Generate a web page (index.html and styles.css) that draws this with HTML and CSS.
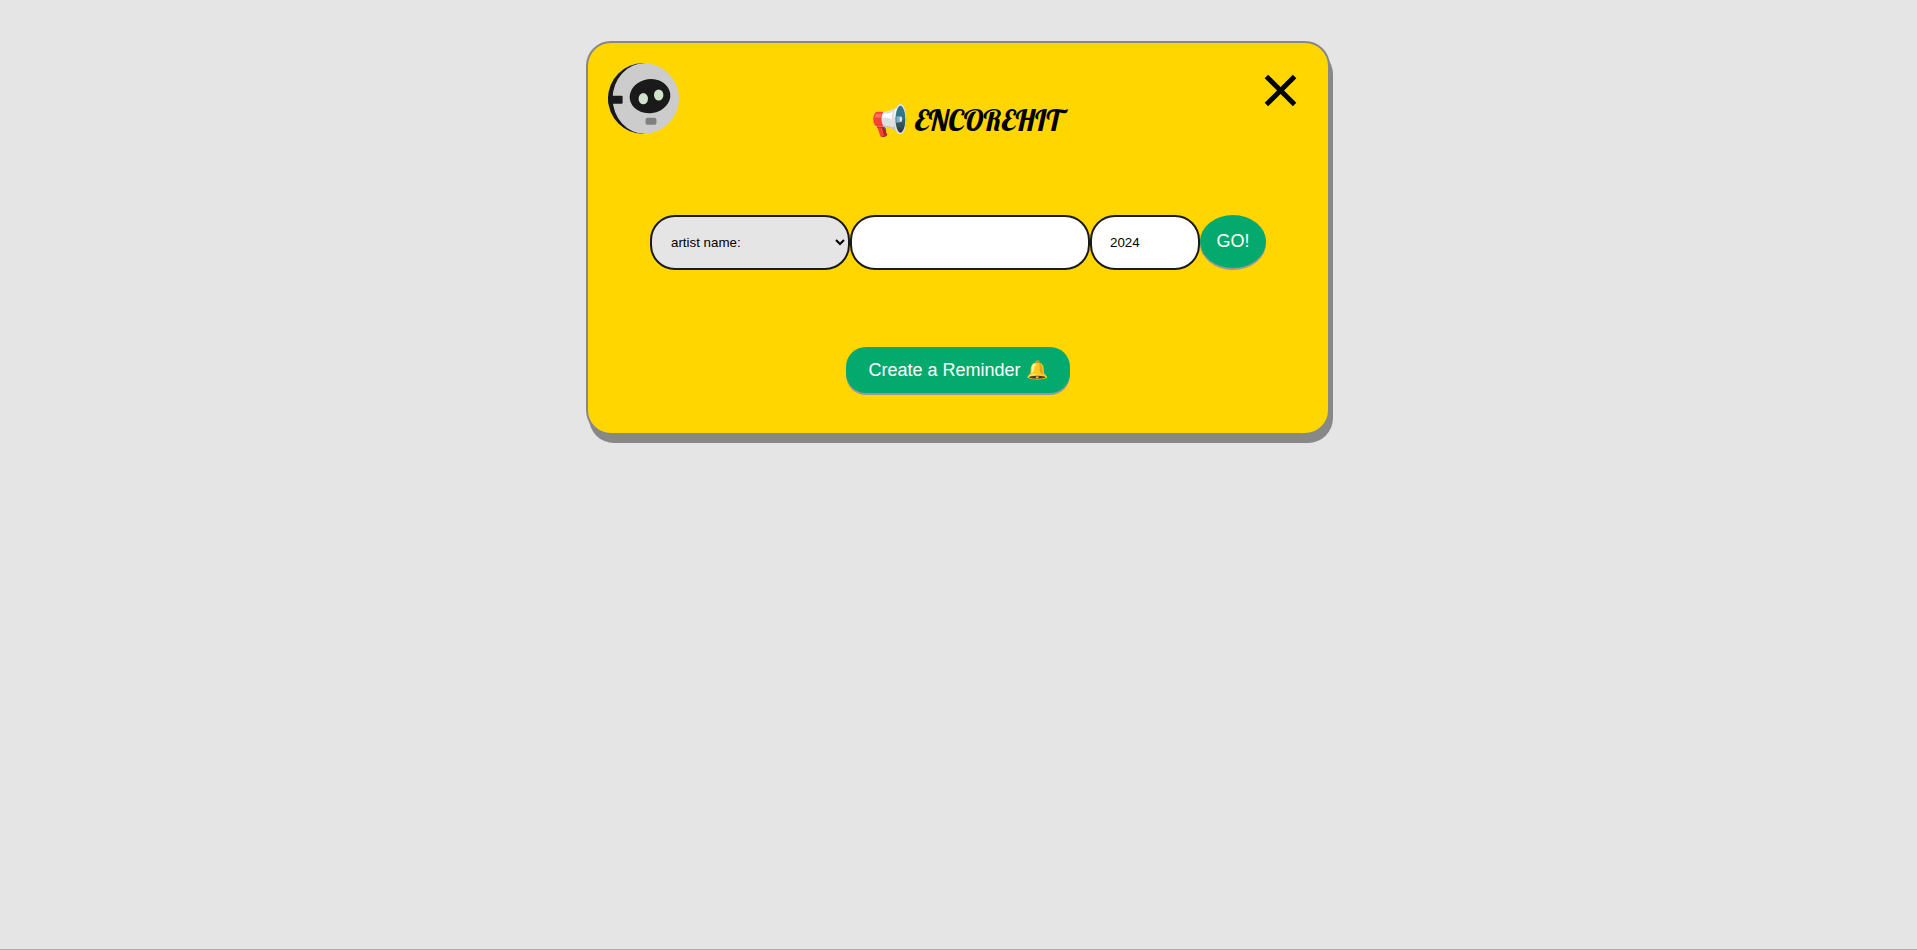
FILE: index.html
```html
<!DOCTYPE html>
<html lang="en">
<head>
<meta charset="utf-8">
<meta name="viewport" content="width=device-width, initial-scale=1">
<title>EncoreHit</title>
<link rel="stylesheet" href="styles.css">
</head>
<body>
<main class="card">
  <header class="card-header">
    <svg class="avatar" viewBox="0 0 71 71" aria-hidden="true">
      <defs><clipPath id="head"><circle cx="35.5" cy="35.5" r="35.5"/></clipPath></defs>
      <g clip-path="url(#head)">
        <rect width="71" height="71" fill="#ccc"/>
        <path d="M37 0V-1H-1V72H37V71A32.4 35.5 0 0 1 37 0Z" fill="#1a1a1a"/>
        <rect x="-3" y="32.7" width="17.6" height="8" rx="1" fill="#1a1a1a"/>
        <ellipse cx="42" cy="33.2" rx="20.4" ry="17" transform="rotate(-8 42 33.2)" fill="#1a1a1a"/>
        <ellipse cx="35.3" cy="35.7" rx="4.7" ry="5.6" fill="#d0e4cc"/>
        <ellipse cx="50.7" cy="32" rx="4.7" ry="5.6" fill="#d0e4cc"/>
        <rect x="37.5" y="54.7" width="11" height="7" rx="2" fill="#808080"/>
      </g>
    </svg>
    <h1 class="title">📢 ENCOREHIT</h1>
    <button class="close" type="button" aria-label="Close">
      <svg class="close-icon" viewBox="0 0 55 55" aria-hidden="true">
        <path d="M13.4 13.4L41.6 41.6M41.6 13.4L13.4 41.6" stroke="#000" stroke-width="4.9" fill="none"/>
      </svg>
    </button>
  </header>
  <form class="search">
    <select class="field field-kind" aria-label="Search by">
      <option>artist name:</option>
    </select>
    <input class="field field-query" type="text" aria-label="Search text">
    <input class="field field-year" type="text" value="2024" aria-label="Year">
    <button class="button go" type="button">GO!</button>
  </form>
  <button class="button reminder" type="button">Create a Reminder 🔔</button>
</main>
<footer class="footer"></footer>
</body>
</html>
```
FILE: styles.css
```css
* {
  box-sizing: border-box;
}

body {
  margin: 0;
  min-height: 100vh;
  display: flex;
  flex-direction: column;
  align-items: center;
  background: #e5e5e5;
  font-family: "Liberation Sans", Arial, sans-serif;
}

.card {
  display: flex;
  flex-direction: column;
  align-items: center;
  width: 100%;
  max-width: 744px;
  margin: 41px 1px 40px 0;
  padding: 20px 20px 40px;
  border: 2px solid #888;
  border-radius: 25px;
  background: #ffd600;
  box-shadow: 3px 8px 0 #888;
}

.card-header {
  display: grid;
  grid-template-columns: 1fr auto 1fr;
  align-items: start;
  width: 100%;
}

.avatar {
  width: 71px;
  height: 71px;
}

.title {
  margin: 37px 0 0;
  padding-left: 16px;
  font: 30px/40px Lobster, cursive;
  color: #000;
  white-space: nowrap;
}

.close {
  justify-self: end;
  width: 55px;
  height: 55px;
  padding: 0;
  border: 0;
  background: none;
  cursor: pointer;
}

.close-icon {
  display: block;
  width: 100%;
  height: 100%;
}

.search {
  display: flex;
  flex-wrap: wrap;
  justify-content: center;
  align-items: flex-start;
  margin: 75px 0 77px;
}

.field {
  height: 55px;
  padding: 0 18px;
  border: 2px solid #1a1a1a;
  border-radius: 25px;
  background: #fff;
  color: #000;
  font-family: "Liberation Sans", Arial, sans-serif;
}

.field-kind {
  width: 200px;
  padding: 0 0 0 15px;
  background: #e5e5e5;
}

.field-query {
  width: 240px;
}

.field-year {
  width: 110px;
}

.button {
  border: 0;
  background: #04aa6d;
  box-shadow: 0 2px 0 #999;
  color: #fff;
  font: 18px "Liberation Sans", Arial, sans-serif;
  cursor: pointer;
}

.go {
  width: 66px;
  height: 53px;
  padding: 0;
  border-radius: 50%;
}

.reminder {
  height: 46px;
  padding: 0 22px;
  border-radius: 20px;
}

.footer {
  width: 100%;
  margin-top: auto;
  border-top: 1px solid #aaa;
}
```
